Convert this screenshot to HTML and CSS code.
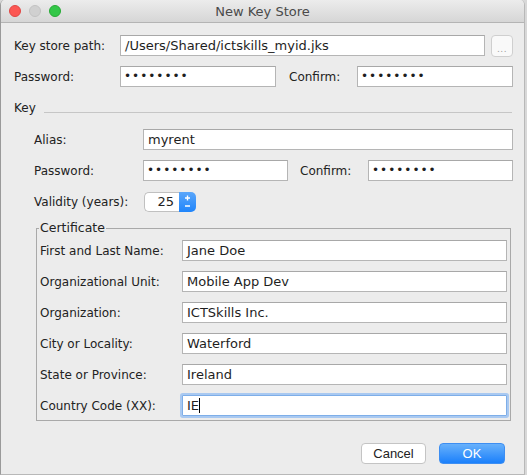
FILE: index.html
```html
<!DOCTYPE html>
<html>
<head>
<meta charset="utf-8">
<link rel="stylesheet" href="styles.css">
</head>
<body>
<div class="window">
  <div class="titlebar">
    <div class="lights">
      <span class="light red"></span>
      <span class="light grey"></span>
      <span class="light green"></span>
    </div>
    <div class="title">New Key Store</div>
  </div>
  <div class="content">
    <div class="row">
      <div class="label w106">Key store path:</div>
      <div class="field w365">/Users/Shared/ictskills_myid.jks</div>
      <div class="browse">...</div>
    </div>
    <div class="row">
      <div class="label w106">Password:</div>
      <div class="field w156 dots">••••••••</div>
      <div class="label confirm w68">Confirm:</div>
      <div class="field w156 dots">••••••••</div>
    </div>

    <div class="section-head">
      <span class="section-title">Key</span>
      <span class="section-line"></span>
    </div>

    <div class="key">
      <div class="row">
        <div class="label w109">Alias:</div>
        <div class="field w370">myrent</div>
      </div>
      <div class="row">
        <div class="label w109">Password:</div>
        <div class="field w145 dots">••••••••</div>
        <div class="label confirm2 w68">Confirm:</div>
        <div class="field w145 dots">••••••••</div>
      </div>
      <div class="row">
        <div class="label w110">Validity (years):</div>
        <div class="spinner">
          <div class="spin-val">25</div>
          <div class="spin-btn">
            <svg width="17" height="20" viewBox="0 0 17 20">
              <path d="M8.5 3.5v5M6 6h5" stroke="#fff" stroke-width="1.4" fill="none"/>
              <path d="M6 14h5" stroke="#fff" stroke-width="1.4" fill="none"/>
            </svg>
          </div>
        </div>
      </div>

      <div class="cert">
        <div class="legend">Certificate</div>
        <div class="crow">
          <div class="label w142">First and Last Name:</div>
          <div class="field w325">Jane Doe</div>
        </div>
        <div class="crow">
          <div class="label w142">Organizational Unit:</div>
          <div class="field w325">Mobile App Dev</div>
        </div>
        <div class="crow">
          <div class="label w142">Organization:</div>
          <div class="field w325">ICTSkills Inc.</div>
        </div>
        <div class="crow">
          <div class="label w142">City or Locality:</div>
          <div class="field w325">Waterford</div>
        </div>
        <div class="crow">
          <div class="label w142">State or Province:</div>
          <div class="field w325">Ireland</div>
        </div>
        <div class="crow">
          <div class="label w142">Country Code (XX):</div>
          <div class="field w325 focus">IE<span class="caret"></span></div>
        </div>
      </div>
    </div>

    <div class="buttons">
      <div class="btn cancel">Cancel</div>
      <div class="btn ok">OK</div>
    </div>
  </div>
</div>
</body>
</html>
```
FILE: styles.css
```css
html, body {
  margin: 0;
  padding: 0;
  background: #d8d8d8;
}
body {
  font-family: "DejaVu Sans", sans-serif;
  font-size: 12px;
  color: #222;
}
.window {
  width: 523px;
  height: 474px;
  background: #ececec;
  border-left: 1px solid #9a9a9a;
  border-right: 1px solid #b8b8b8;
  border-bottom: 1px solid #b8b8b8;
  border-radius: 5px 5px 0 0;
  overflow: hidden;
}
.titlebar {
  height: 22px;
  border-bottom: 1px solid #b4b4b4;
  background: linear-gradient(#ececec, #d6d6d6);
  display: flex;
  align-items: center;
  position: relative;
}
.lights {
  display: flex;
  gap: 8px;
  padding-left: 8px;
}
.light {
  width: 12px;
  height: 12px;
  border-radius: 50%;
  box-sizing: border-box;
}
.red { background: #fc5753; border: 1px solid #df4744; }
.grey { background: #d0d0d0; border: 1px solid #c2c2c2; }
.green { background: #33c748; border: 1px solid #27aa35; }
.title {
  position: absolute;
  left: 0;
  right: 0;
  text-align: center;
  font-size: 13px;
  color: #4a4a4a;
  font-family: "DejaVu Sans", sans-serif;
}
.content {
  padding: 12px 0 0 13px;
}
.row {
  display: flex;
  align-items: center;
  height: 21px;
  margin-bottom: 10px;
}
.label {
  flex: none;
  white-space: nowrap;
}
.w106 { width: 106px; }
.w109 { width: 109px; }
.w110 { width: 110px; }
.w142 { width: 142px; }
.w68 { width: 68px; }
.w365 { width: 365px; }
.w370 { width: 370px; }
.w156 { width: 156px; }
.w145 { width: 145px; }
.w325 { width: 325px; }
.confirm { margin-left: 13px; }
.confirm2 { margin-left: 12px; }
.field {
  flex: none;
  box-sizing: border-box;
  height: 21px;
  background: #fff;
  border: 1px solid #b5b5b5;
  border-top-color: #a8a8a8;
  padding-left: 4px;
  line-height: 19px;
  font-size: 13px;
  color: #1e1e1e;
  white-space: nowrap;
  overflow: hidden;
}
.dots {
  font-size: 12px;
  letter-spacing: 1px;
  padding-left: 3px;
}
.browse {
  margin-left: 6px;
  width: 22px;
  height: 22px;
  box-sizing: border-box;
  border: 1px solid #cfcfcf;
  border-radius: 4px;
  background: #f9f9f9;
  color: #a0a0a0;
  font-size: 9px;
  text-align: center;
  line-height: 26px;
  letter-spacing: 0.5px;
}
.section-head {
  display: flex;
  align-items: center;
  height: 16px;
  margin-top: 13px;
  margin-bottom: 13px;
}
.section-line {
  flex: none;
  width: 468px;
  margin-left: 8px;
  border-top: 1px solid #c6c6c6;
  margin-top: 9px;
}
.key {
  padding-left: 20px;
}
.spinner {
  display: flex;
  height: 20px;
}
.spin-val {
  width: 35px;
  box-sizing: border-box;
  background: #fff;
  border: 1px solid #c0c0c0;
  border-right: none;
  border-radius: 5px 0 0 5px;
  text-align: right;
  padding-right: 5px;
  font-size: 13px;
  line-height: 18px;
}
.spin-btn {
  width: 17px;
  height: 20px;
  background: linear-gradient(#5aa6fa, #2085fb);
  border-radius: 0 5px 5px 0;
}
.spin-btn svg {
  display: block;
}
.cert {
  position: relative;
  width: 475px;
  box-sizing: border-box;
  margin-left: 2px;
  margin-top: 16px;
  border: 1px solid #a9a9a9;
  padding: 11px 4px 4px 3px;
}
.legend {
  position: absolute;
  top: -9px;
  left: 2px;
  background: #ececec;
  padding: 0 1px;
  font-size: 12.5px;
}
.crow {
  display: flex;
  align-items: center;
  height: 21px;
  margin-bottom: 10px;
}
.crow:last-child {
  margin-bottom: 0;
}
.focus {
  border: 1px solid #7eaee8;
  box-shadow: 0 0 0 2px #a9c9f1;
  border-radius: 1px;
}
.caret {
  display: inline-block;
  width: 1px;
  height: 15px;
  background: #000;
  vertical-align: -3px;
}
.buttons {
  display: flex;
  justify-content: flex-end;
  gap: 13px;
  margin-top: 22px;
  padding-right: 19px;
}
.btn {
  height: 21px;
  box-sizing: border-box;
  border-radius: 4px;
  text-align: center;
  font-family: "Liberation Sans", sans-serif;
  font-size: 13px;
  line-height: 19px;
}
.cancel {
  width: 65px;
  background: #fff;
  border: 1px solid #c4c4c4;
  color: #222;
}
.ok {
  width: 66px;
  background: linear-gradient(#68b1fb, #1b80fb);
  border: 1px solid #3d8ef2;
  color: #fff;
}
```
